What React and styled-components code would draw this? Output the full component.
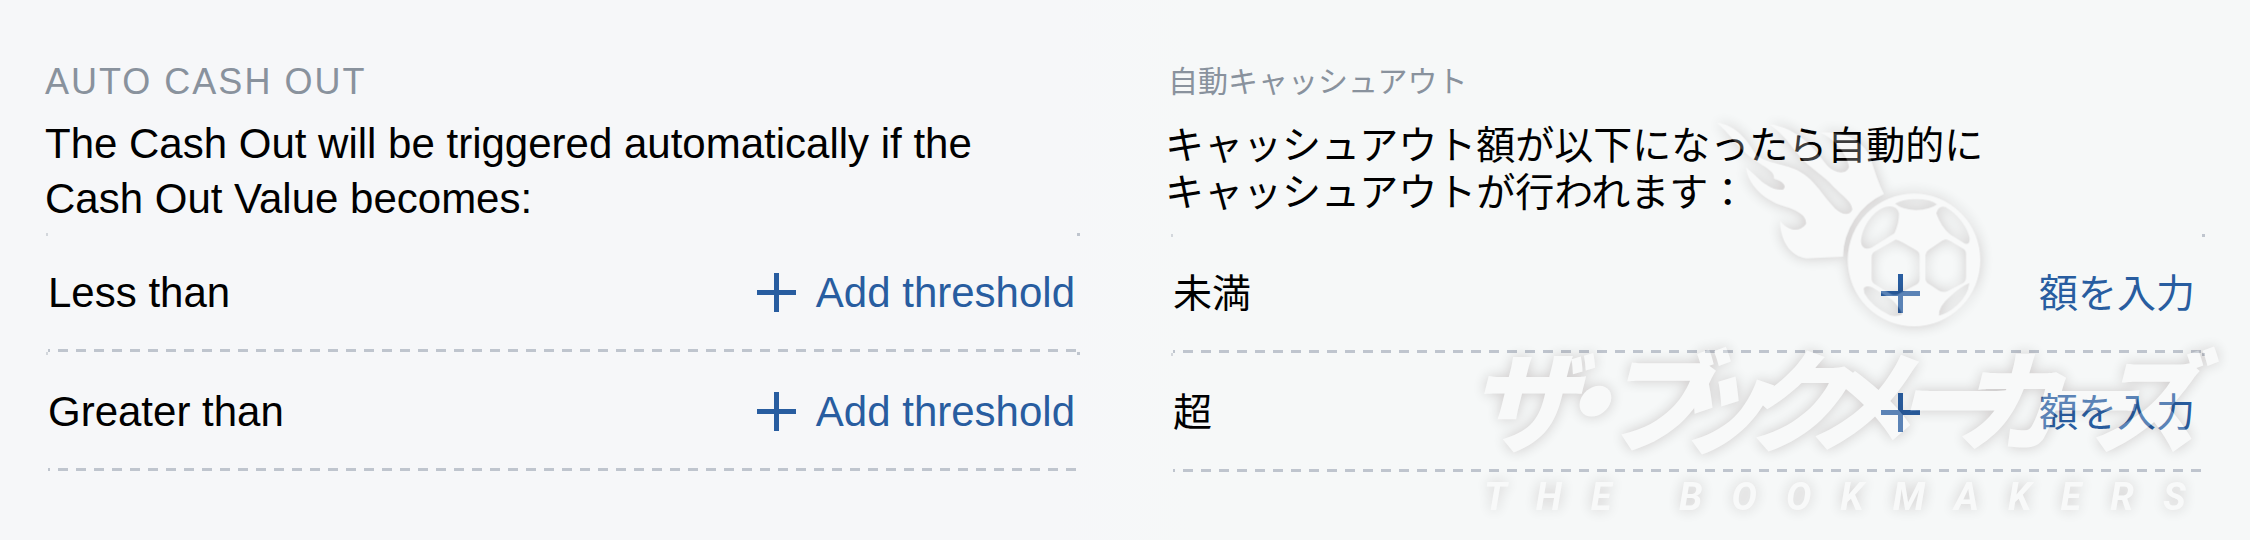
import React from 'react';
import styled, { createGlobalStyle } from 'styled-components';

const GlobalStyle = createGlobalStyle`
  * {
    box-sizing: border-box;
  }

  body {
    margin: 0;
    background: #f6f7f9;
  }
`;

const Page = styled.main`
  position: relative;
  display: grid;
  grid-template-columns: 1fr 1fr;
  min-height: 100vh;
  overflow: hidden;
  background: linear-gradient(90deg, #f6f7f9 0%, #f6f7f9 47%, #f6f8f8 53%);
  font-family: 'Liberation Sans', 'Noto Sans CJK JP', sans-serif;
`;

const Panel = styled.section`
  padding: 60px 45px;
  padding-left: ${props => (props.lang === 'ja' ? 40 : 45)}px;
  line-height: ${props => (props.lang === 'ja' ? 47 : 55)}px;
`;

const Title = styled.h2`
  margin: 0;
  padding-left: ${props => (props.lang === 'ja' ? 3 : 0)}px;
  font-size: ${props => (props.lang === 'ja' ? 30 : 36)}px;
  line-height: 44px;
  letter-spacing: ${props => (props.lang === 'ja' ? 0 : '2px')};
  font-weight: 400;
  color: #89929d;
`;

const Description = styled.p`
  margin: 0;
  padding: ${props => (props.lang === 'ja' ? '18px 0' : '12px 0 7px')};
  font-size: ${props => (props.lang === 'ja' ? 39 : 42)}px;
  color: #000000;
`;

const List = styled.ul`
  margin: 0;
  margin-left: ${props => (props.lang === 'ja' ? 6 : 1)}px;
  padding: 0;
  list-style: none;
`;

const Item = styled.li`
  display: flex;
  align-items: center;
  justify-content: space-between;
  min-height: 119px;
  padding: 0 ${props => (props.lang === 'ja' ? 10 : 5)}px 0 2px;
  font-size: ${props => (props.lang === 'ja' ? 39 : 42)}px;
  color: #000000;
  background-image: repeating-linear-gradient(
      90deg,
      #bfc5ce 0,
      #bfc5ce 2px,
      transparent 2px,
      transparent 10px,
      #bfc5ce 10px,
      #bfc5ce 18px
    ),
    linear-gradient(#d3d7dc, #d3d7dc),
    linear-gradient(#bfc5ce, #bfc5ce);
  background-position: 2px 100%, 0 0, 100% 0;
  background-size: calc(100% - 6px) 3px, 2px 3px, 3px 3px;
  background-repeat: no-repeat;
`;

const AddButton = styled.button`
  display: flex;
  align-items: center;
  justify-content: space-between;
  gap: 20px;
  min-width: 314px;
  margin: 0;
  padding: 0;
  border: 0;
  background: none;
  font: inherit;
  color: #285da0;
  cursor: pointer;
`;

const Plus = styled.svg`
  width: 39px;
  height: 39px;
`;

const Watermark = styled.svg`
  position: absolute;
  right: 0;
  top: 70px;
  width: 800px;
  height: 470px;
  opacity: 0.24;
  pointer-events: none;
`;

const Mark = styled.g`
  fill: #ffffff;
  filter: drop-shadow(0 0 7px rgba(30, 0, 0, 0.75));
`;

const BrandName = styled.text`
  font-family: 'Noto Sans CJK JP', sans-serif;
  font-size: 110px;
  font-weight: 900;
  font-style: italic;
`;

const BrandCaption = styled.text`
  font-family: Roboto, sans-serif;
  font-size: 38px;
  font-weight: 700;
  font-style: italic;
  letter-spacing: 29px;
`;

const panels = [
  {
    lang: 'en',
    title: 'AUTO CASH OUT',
    lines: ['The Cash Out will be triggered automatically if the', 'Cash Out Value becomes:'],
    action: 'Add threshold',
    rows: ['Less than', 'Greater than']
  },
  {
    lang: 'ja',
    title: '自動キャッシュアウト',
    lines: ['キャッシュアウト額が以下になったら自動的に', 'キャッシュアウトが行われます：'],
    action: '額を入力',
    rows: ['未満', '超']
  }
];

function CashOutPanel({ lang, title, lines, action, rows }) {
  return (
    <Panel lang={lang}>
      <Title lang={lang}>{title}</Title>
      <Description lang={lang}>
        {lines[0]}
        <br />
        {lines[1]}
      </Description>
      <List lang={lang}>
        {rows.map(row => (
          <Item key={row} lang={lang}>
            <span>{row}</span>
            <AddButton type="button">
              <Plus viewBox="0 0 39 39" aria-hidden="true">
                <path d="M17 0h5v39h-5zM0 17h39v5H0z" fill="currentColor" />
              </Plus>
              {action}
            </AddButton>
          </Item>
        ))}
      </List>
    </Panel>
  );
}

function BookmakersWatermark() {
  return (
    <Watermark viewBox="0 0 800 470">
      <Mark>
        {/* flame */}
        <path
          transform="translate(250 30) scale(0.3333)"
          d="M552 282C535 250 525 215 508 165C485 120 430 92 360 98C400 112 440 160 447 200C440 225 405 222 380 195C345 150 300 85 205 72C245 95 270 135 300 170C330 205 370 225 400 260C430 290 455 305 457 328C450 348 425 345 405 325C370 290 345 240 300 215C260 190 190 190 165 160C140 120 110 75 50 68C85 95 110 140 150 170C190 200 225 212 222 236C245 242 262 258 250 268C225 275 190 250 175 235C155 215 145 210 138 200C140 240 175 290 240 315C290 330 320 345 318 372C300 398 265 395 240 362C240 420 270 470 320 475L429 470A213 213 0 0 1 552 282Z"
        />
        {/* ball with its panels cut out */}
        <path
          transform="translate(385 115) scale(0.3333)"
          fillRule="evenodd"
          d="M38 225A199 199 0 1 1 436 225A199 199 0 1 1 38 225Z
            M180 56Q200 42 242 42Q288 42 306 58Q285 74 242 75Q200 74 180 56Z
            M78 170C80 130 110 80 150 66Q185 58 192 85Q192 115 178 145L110 188Q80 198 78 170Z
            M304 85Q310 60 332 66C370 88 400 130 404 160Q404 182 388 175L345 148Q318 125 304 85Z
            M182 164Q190 164 245 197Q254 202 254 215V280Q254 292 245 298L188 328Q178 332 168 327L120 298Q110 292 110 280V215Q110 205 120 199Z
            M332 163Q340 163 384 191Q393 196 393 208V276Q393 288 384 294L338 318Q325 324 312 317L280 296Q271 290 271 278V212Q271 202 280 195L322 167Z
            M86 310Q92 300 112 307L168 342Q190 360 202 388Q185 396 165 391Q110 365 88 325Z
            M403 294Q400 330 365 362Q340 385 312 392Q310 365 345 335Q375 305 403 294Z"
        />
        <BrandName x="18 80 152 212 288 354 443 503 576 640" y="373">
          ザ・ブックメーカーズ
        </BrandName>
        <BrandCaption x="34" y="440">
          THE BOOKMAKERS
        </BrandCaption>
      </Mark>
    </Watermark>
  );
}

function App() {
  return (
    <>
      <GlobalStyle />
      <Page>
        {panels.map(panel => (
          <CashOutPanel key={panel.lang} {...panel} />
        ))}
        <BookmakersWatermark />
      </Page>
    </>
  );
}

export default App;
